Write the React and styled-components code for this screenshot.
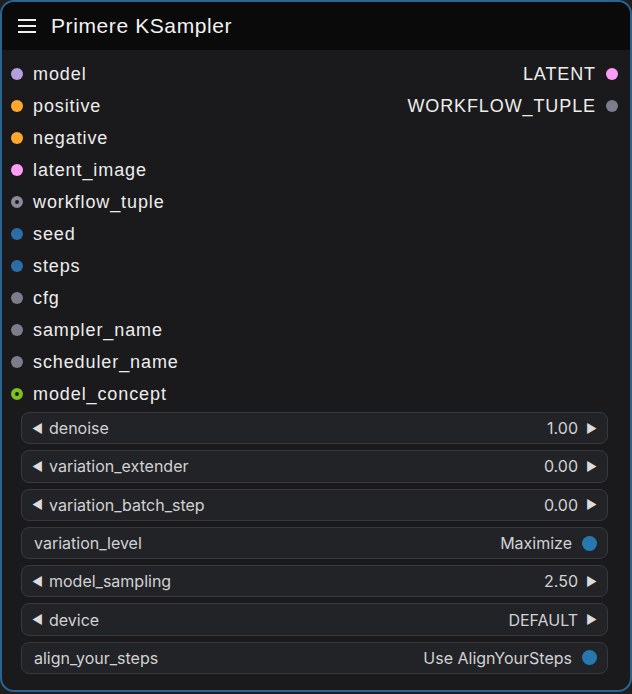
import styled, { createGlobalStyle } from "styled-components";

const GlobalStyle = createGlobalStyle`
  html, body {
    margin: 0;
    padding: 0;
    background: #1e1e1f;
  }
  #root {
    width: 632px;
    height: 694px;
  }
`;

const Node = styled.div`
  box-sizing: border-box;
  width: 632px;
  height: 692px;
  border: 2px solid #2a6592;
  border-radius: 14px;
  background: #1a1a1c;
  overflow: hidden;
  display: flex;
  flex-direction: column;
`;

const Header = styled.div`
  height: 48px;
  background: #0a0a0b;
  display: flex;
  align-items: center;
  padding-left: 15px;
  gap: 14px;
  flex-shrink: 0;
`;

const Title = styled.div`
  font-family: "Liberation Sans", Arial, sans-serif;
  font-size: 21px;
  color: #f2f2f2;
  letter-spacing: 0.6px;
`;

const Slots = styled.div`
  display: flex;
  padding-top: 8px;
`;

const Column = styled.div`
  display: flex;
  flex-direction: column;
  flex: ${(p) => (p.$right ? "0 0 auto" : "1")};
  align-items: ${(p) => (p.$right ? "flex-end" : "flex-start")};
`;

const Slot = styled.div`
  height: 32px;
  display: flex;
  align-items: center;
  gap: 10px;
  flex-direction: ${(p) => (p.$right ? "row-reverse" : "row")};
  padding: ${(p) => (p.$right ? "0 12px 0 0" : "0 0 0 9px")};
  font-family: "Liberation Sans", Arial, sans-serif;
  font-size: 18px;
  letter-spacing: 0.9px;
  color: #ededed;
`;

const Dot = styled.span`
  box-sizing: border-box;
  width: 12px;
  height: 12px;
  border-radius: 50%;
  flex-shrink: 0;
  background: ${(p) => (p.$ring ? "#1a1a1c" : p.$color)};
  border: ${(p) => (p.$ring ? `4px solid ${p.$color}` : "none")};
`;

const Widgets = styled.div`
  display: flex;
  flex-direction: column;
  gap: 6px;
  padding: 0 22px 0 19px;
  margin-top: 2px;
`;

const Widget = styled.div`
  box-sizing: border-box;
  height: 32.3px;
  border: 1px solid #38393c;
  border-radius: 8px;
  background: #222326;
  display: flex;
  align-items: center;
  padding: ${(p) => (p.$toggle ? "0 10px 0 12px" : "0 10px 0 10px")};
  font-family: Inter, "Noto Sans", sans-serif;
  font-size: 16px;
  color: #d2d2d4;
`;

const Arrow = styled.span`
  font-size: 12px;
  color: #dcdcdc;
  width: 17px;
  text-align: ${(p) => (p.$right ? "right" : "left")};
`;

const Name = styled.span`
  flex: 1;
`;

const Value = styled.span`
  margin-right: ${(p) => (p.$toggle ? "10px" : "2px")};
`;

const Knob = styled.span`
  width: 15px;
  height: 15px;
  border-radius: 50%;
  background: #2878b0;
`;

const MenuIcon = () => (
  <svg width="20" height="16" viewBox="0 0 20 16">
    <g stroke="#f0f0f0" strokeWidth="2">
      <line x1="1" y1="2" x2="19" y2="2" />
      <line x1="1" y1="8" x2="19" y2="8" />
      <line x1="1" y1="14" x2="19" y2="14" />
    </g>
  </svg>
);

const inputs = [
  { name: "model", color: "#b49fdc" },
  { name: "positive", color: "#ffa830" },
  { name: "negative", color: "#ffa830" },
  { name: "latent_image", color: "#ff9cf5" },
  { name: "workflow_tuple", color: "#8a8a98", ring: true },
  { name: "seed", color: "#2a6ea6" },
  { name: "steps", color: "#2a6ea6" },
  { name: "cfg", color: "#7c7c8c" },
  { name: "sampler_name", color: "#7c7c8c" },
  { name: "scheduler_name", color: "#7c7c8c" },
  { name: "model_concept", color: "#7cc021", ring: true },
];

const outputs = [
  { name: "LATENT", color: "#ff9cf5" },
  { name: "WORKFLOW_TUPLE", color: "#7c7c8c" },
];

const widgets = [
  { name: "denoise", value: "1.00" },
  { name: "variation_extender", value: "0.00" },
  { name: "variation_batch_step", value: "0.00" },
  { name: "variation_level", value: "Maximize", toggle: true },
  { name: "model_sampling", value: "2.50" },
  { name: "device", value: "DEFAULT" },
  { name: "align_your_steps", value: "Use AlignYourSteps", toggle: true },
];

export default function App() {
  return (
    <>
      <GlobalStyle />
      <Node>
        <Header>
          <MenuIcon />
          <Title>Primere KSampler</Title>
        </Header>
        <Slots>
          <Column>
            {inputs.map((s) => (
              <Slot key={s.name}>
                <Dot $color={s.color} $ring={s.ring} />
                {s.name}
              </Slot>
            ))}
          </Column>
          <Column $right>
            {outputs.map((s) => (
              <Slot key={s.name} $right>
                <Dot $color={s.color} />
                {s.name}
              </Slot>
            ))}
          </Column>
        </Slots>
        <Widgets>
          {widgets.map((w) => (
            <Widget key={w.name} $toggle={w.toggle}>
              {!w.toggle && <Arrow>◀</Arrow>}
              <Name>{w.name}</Name>
              <Value $toggle={w.toggle}>{w.value}</Value>
              {w.toggle ? <Knob /> : <Arrow $right>▶</Arrow>}
            </Widget>
          ))}
        </Widgets>
      </Node>
    </>
  );
}
